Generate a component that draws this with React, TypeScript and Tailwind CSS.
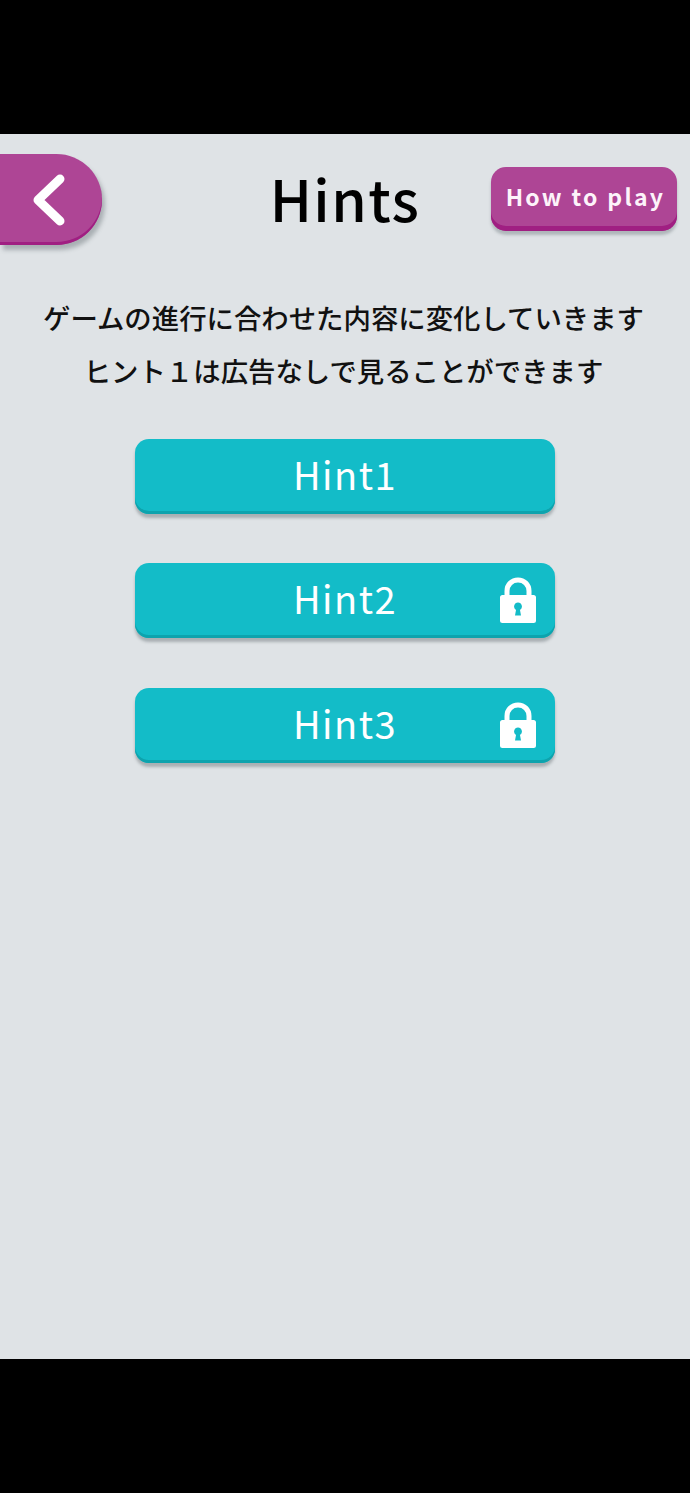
const font = { jp: "font-['Noto_Sans_CJK_JP','Noto_Sans',sans-serif]" };

function LockIcon() {
  return (
    <svg viewBox="0 0 38 46" className="h-[46px] w-[38px]" aria-hidden="true">
      <path d="M8 21V14C8 7.6 12.8 3 19 3s11 4.6 11 11v7" fill="none" stroke="#fff" strokeWidth="5" />
      <path
        fillRule="evenodd"
        fill="#fff"
        d="M3.5 18h31a2.5 2.5 0 0 1 2.5 2.5v23a2.5 2.5 0 0 1-2.5 2.5h-31A2.5 2.5 0 0 1 1 43.5v-23A2.5 2.5 0 0 1 3.5 18ZM19 25.5a4 4 0 0 0-2 7.4L16 38.5h6l-1-5.6a4 4 0 0 0-2-7.4Z"
      />
    </svg>
  );
}

function HintButton({ label, locked }: { label: string; locked?: boolean }) {
  return (
    <button className="relative flex h-[75px] w-[420px] items-center justify-center rounded-[14px] bg-[#13bcc8] pb-[5px] shadow-[inset_0_-3px_0_#0ea3ad,0_4px_3px_rgba(90,100,105,0.4)]">
      <span className="text-[38px] leading-none tracking-[1.5px] text-white">{label}</span>
      {locked && (
        <span className="absolute right-[18px] top-[14px]">
          <LockIcon />
        </span>
      )}
    </button>
  );
}

export default function App() {
  return (
    <div className={`flex h-[1493px] w-[690px] flex-col bg-black ${font.jp}`}>
      <div className="h-[134px]" />
      <div className="flex h-[1225px] flex-col items-center bg-[#dfe3e6]">
        {/* Header */}
        <div className="grid w-full grid-cols-[1fr_auto_1fr] items-start pt-5">
          <button className="flex h-[91px] w-[102px] items-center rounded-r-[46px] bg-[#ae4595] pl-[32px] shadow-[inset_0_-3px_0_#a01f82,3px_5px_4px_rgba(90,100,105,0.4)]">
            <svg viewBox="0 0 34 52" className="h-[52px] w-[34px]" aria-hidden="true">
              <path d="M28 5 6 26l22 21" fill="none" stroke="#fff" strokeWidth="9" strokeLinecap="round" strokeLinejoin="round" />
            </svg>
          </button>
          <h1 className="pt-[9px] text-[57px] font-medium leading-[68px] tracking-[1.4px] text-black">Hints</h1>
          <div className="flex justify-end pr-[13px] pt-[13px]">
            <button className="flex h-[64px] w-[186px] items-center justify-center rounded-[15px] bg-[#ae4595] pb-[6px] pl-[3px] text-[23px] font-bold tracking-[2.3px] text-[#fdf3fa] shadow-[inset_0_-5px_0_#a01f82,0_4px_3px_rgba(90,100,105,0.35)]">
              How to play
            </button>
          </div>
        </div>

        {/* Description */}
        <div className="mt-[46px] flex flex-col items-center pr-[3px] text-[27.4px] font-medium leading-[53px] text-[#111]">
          <p>ゲームの進行に合わせた内容に変化していきます</p>
          <p>ヒント１は広告なしで見ることができます</p>
        </div>

        {/* Hint buttons */}
        <div className="mt-[41.8px] flex flex-col gap-[49.5px]">
          <HintButton label="Hint1" />
          <HintButton label="Hint2" locked />
          <HintButton label="Hint3" locked />
        </div>
      </div>
      <div className="flex-1" />
    </div>
  );
}
